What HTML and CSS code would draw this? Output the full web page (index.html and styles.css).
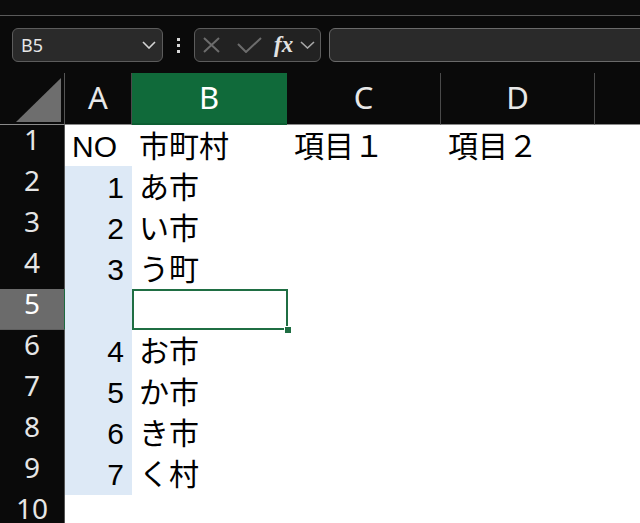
FILE: index.html
```html
<!DOCTYPE html>
<html lang="ja">
<head>
    <meta charset="UTF-8">
    <meta name="viewport" content="width=device-width, initial-scale=1.0">
    <title>Book1 - Excel</title>
    <link rel="stylesheet" href="styles.css">
</head>
<body>

    <div class="ribbon-edge"></div>

    <!-- Formula bar -->
    <div class="formula-bar">
        <div class="name-box">
            <span class="name-ref">B5</span>
            <svg class="chevron" width="14" height="8" viewBox="0 0 14 8"><path d="M1 1 L7 7 L13 1" fill="none" stroke="#d4d4d4" stroke-width="1.6"/></svg>
        </div>
        <div class="grip"><i></i><i></i><i></i></div>
        <div class="fx-box">
            <svg class="icon-cancel" width="17" height="16" viewBox="0 0 17 16"><path d="M1 1 L16 15 M16 1 L1 15" stroke="#6c6c6c" stroke-width="2"/></svg>
            <svg class="icon-enter" width="25" height="16" viewBox="0 0 25 16"><path d="M1 7 L9 15 L24 1" fill="none" stroke="#6c6c6c" stroke-width="2"/></svg>
            <span class="fx">fx</span>
            <svg class="chevron small" width="15" height="8" viewBox="0 0 15 8"><path d="M1 1 L7.5 7 L14 1" fill="none" stroke="#a8a8a8" stroke-width="1.6"/></svg>
        </div>
        <div class="formula-input"></div>
    </div>

    <!-- Sheet grid -->
    <div class="sheet">
        <div class="row head-row">
            <div class="corner"><div class="corner-mark"></div></div>
            <div class="col-head">A</div>
            <div class="col-head active">B</div>
            <div class="col-head">C</div>
            <div class="col-head">D</div>
            <div class="col-head last"></div>
        </div>
        <div class="row">
            <div class="row-head">1</div>
            <div class="cell">NO</div>
            <div class="cell">市町村</div>
            <div class="cell">項目１</div>
            <div class="cell">項目２</div>
            <div class="cell"></div>
        </div>
        <div class="row">
            <div class="row-head">2</div>
            <div class="cell num fill">1</div>
            <div class="cell">あ市</div>
            <div class="cell"></div>
            <div class="cell"></div>
            <div class="cell"></div>
        </div>
        <div class="row">
            <div class="row-head">3</div>
            <div class="cell num fill">2</div>
            <div class="cell">い市</div>
            <div class="cell"></div>
            <div class="cell"></div>
            <div class="cell"></div>
        </div>
        <div class="row">
            <div class="row-head">4</div>
            <div class="cell num fill">3</div>
            <div class="cell">う町</div>
            <div class="cell"></div>
            <div class="cell"></div>
            <div class="cell"></div>
        </div>
        <div class="row">
            <div class="row-head active">5</div>
            <div class="cell num fill"></div>
            <div class="cell selected"></div>
            <div class="cell"></div>
            <div class="cell"></div>
            <div class="cell"></div>
        </div>
        <div class="row">
            <div class="row-head">6</div>
            <div class="cell num fill">4</div>
            <div class="cell">お市</div>
            <div class="cell"></div>
            <div class="cell"></div>
            <div class="cell"></div>
        </div>
        <div class="row">
            <div class="row-head">7</div>
            <div class="cell num fill">5</div>
            <div class="cell">か市</div>
            <div class="cell"></div>
            <div class="cell"></div>
            <div class="cell"></div>
        </div>
        <div class="row">
            <div class="row-head">8</div>
            <div class="cell num fill">6</div>
            <div class="cell">き市</div>
            <div class="cell"></div>
            <div class="cell"></div>
            <div class="cell"></div>
        </div>
        <div class="row">
            <div class="row-head">9</div>
            <div class="cell num fill">7</div>
            <div class="cell">く村</div>
            <div class="cell"></div>
            <div class="cell"></div>
            <div class="cell"></div>
        </div>
        <div class="row tail-row">
            <div class="row-head">10</div>
            <div class="cell"></div>
            <div class="cell"></div>
            <div class="cell"></div>
            <div class="cell"></div>
            <div class="cell"></div>
        </div>
    </div>

</body>
</html>
```

FILE: styles.css
```css
body {
    margin: 0;
    background-color: #0a0a0a;
    font-family: "Noto Sans", "Noto Sans CJK JP", sans-serif;
    overflow: hidden;
    height: 523px;
}

.ribbon-edge {
    height: 15px;
    border-bottom: 1px solid #5a5a5a;
    background-color: #0c0c0c;
}

/* formula bar */
.formula-bar {
    display: flex;
    align-items: center;
    height: 57px;
    padding: 12px 0 11px 12px;
    box-sizing: border-box;
}
.name-box {
    width: 151px;
    height: 34px;
    box-sizing: border-box;
    border: 1px solid #5c5c5c;
    border-radius: 6px;
    background-color: #2a2a2a;
    display: flex;
    align-items: center;
    justify-content: space-between;
    padding: 0 6px 0 8px;
}
.name-ref {
    color: #e6e6e6;
    font-size: 18px;
}
.grip {
    width: 31px;
    display: flex;
    flex-direction: column;
    align-items: center;
    gap: 3px;
}
.grip i {
    display: block;
    width: 3px;
    height: 3px;
    background-color: #d8d8d8;
}
.fx-box {
    width: 127px;
    height: 34px;
    box-sizing: border-box;
    border: 1px solid #5c5c5c;
    border-radius: 6px;
    background-color: #222;
    display: flex;
    align-items: center;
    padding-left: 8px;
}
.icon-cancel { margin-right: 17px; }
.icon-enter { margin-right: 12px; }
.fx {
    font-family: "Liberation Serif", serif;
    font-style: italic;
    font-weight: bold;
    font-size: 23px;
    color: #e2e2e2;
    margin-right: 7px;
    line-height: 1;
    margin-top: -2px;
}
.formula-input {
    flex: 1;
    height: 34px;
    box-sizing: border-box;
    margin-left: 8px;
    margin-right: -10px;
    border: 1px solid #6a6a6a;
    border-radius: 6px;
    background-color: #2a2a2a;
}

/* sheet */
.sheet {
    background-color: #fff;
}
.row {
    display: grid;
    grid-template-columns: 65px 67px 155px 154px 154px 1fr;
    height: 41px;
}
.head-row {
    height: 52px;
    background-color: #0a0a0a;
}
.tail-row {
    height: 29px;
}
.corner {
    border-right: 1px solid #555;
    border-bottom: 1px solid #8a8a8a;
    display: flex;
    align-items: flex-end;
    justify-content: flex-end;
    padding: 0 3px 2px 0;
}
.corner-mark {
    width: 45px;
    height: 44px;
    background-color: #6e6e6e;
    clip-path: polygon(100% 0, 100% 100%, 0 100%);
}
.col-head {
    border-bottom: 1px solid #8a8a8a;
    border-right: 1px solid #4a4a4a;
    color: #e8e8e8;
    font-size: 31px;
    line-height: 48px;
    text-align: center;
}
.col-head.active {
    background-color: #106a3a;
    border-right-color: #106a3a;
    border-bottom: 2px solid #0d5f33;
    color: #fff;
}
.col-head.last {
    border-right: none;
}
.row-head {
    background-color: #0a0a0a;
    border-right: 1px solid #555;
    border-bottom: 1px solid #5e5e5e;
    color: #e6e6e6;
    font-size: 28px;
    line-height: 28px;
    text-align: center;
}
.tail-row .row-head {
    border-bottom: none;
}
.row-head.active {
    background-color: #6b6b6b;
    color: #fff;
    border-right: 2px solid #1d6b40;
    margin-right: -1px;
}
.cell {
    font-family: "Liberation Sans", "Noto Sans CJK JP", sans-serif;
    font-size: 30px;
    line-height: 41px;
    padding: 1px 0 0 7px;
    box-sizing: border-box;
    color: #000;
    white-space: nowrap;
}
.tail-row .cell {
    line-height: 28px;
}
.cell.num {
    text-align: right;
    padding: 1px 8px 0 0;
}
.cell.fill {
    background-color: #dde9f6;
}
.cell.selected {
    position: relative;
    border: 2px solid #1f6e43;
    margin-right: -1px;
}
.cell.selected::after {
    content: "";
    position: absolute;
    right: -5px;
    bottom: -5px;
    width: 6px;
    height: 6px;
    background-color: #1f6e43;
    border: 1px solid #fff;
    border-width: 1px 0 0 1px;
}
```
